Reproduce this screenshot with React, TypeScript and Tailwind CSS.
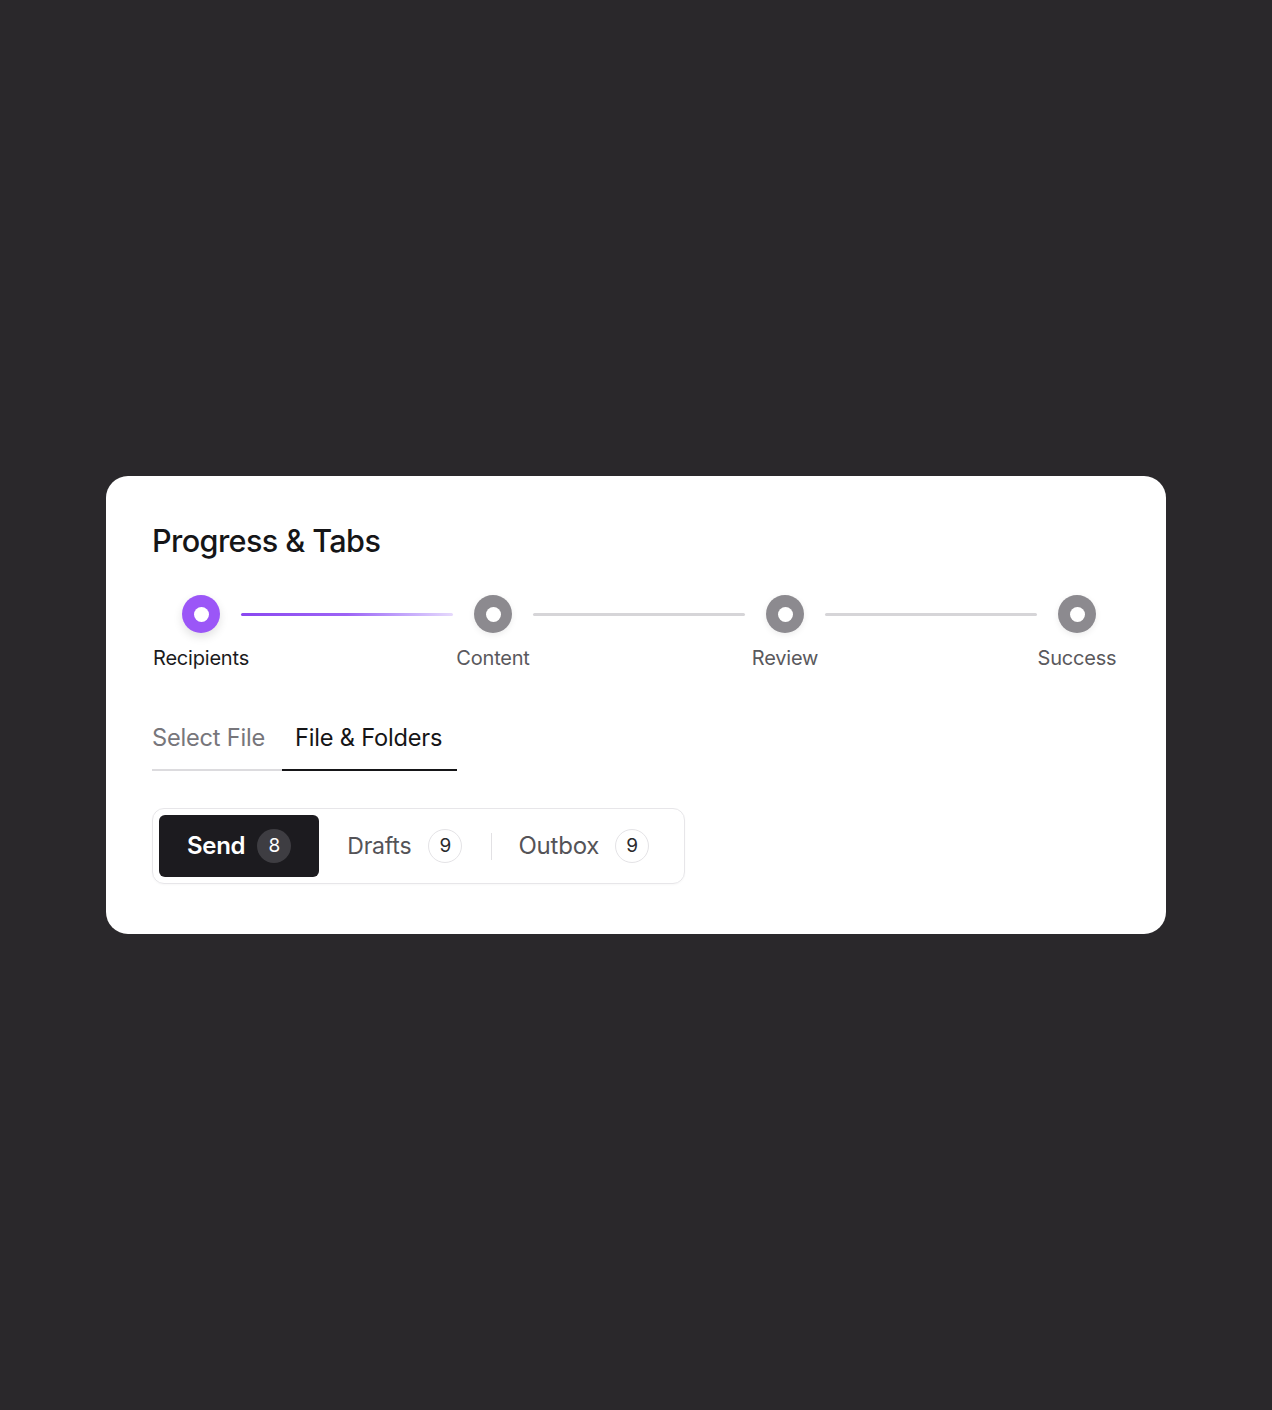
import React from "react";

const font = { fontFamily: "Inter, 'Noto Sans', sans-serif" };

function Dot({ active }: { active?: boolean }) {
  return (
    <div
      className={
        "flex h-[38px] w-[38px] flex-none items-center justify-center rounded-full " +
        (active
          ? "bg-[#9b56f7] shadow-[0_4px_10px_rgba(0,0,0,0.12)]"
          : "bg-[#8c8a8f] shadow-[0_2px_6px_rgba(0,0,0,0.08)]")
      }
    >
      <div className="h-[15px] w-[15px] rounded-full bg-white" />
    </div>
  );
}

function Step({ label, active }: { label: string; active?: boolean }) {
  return (
    <div className="flex w-[38px] flex-none flex-col items-center">
      <Dot active={active} />
      <div
        className={
          "mt-[13px] whitespace-nowrap text-[20px] leading-[24px] tracking-[-0.2px] " +
          (active ? "text-[#1b1b1d]" : "text-[#5a595d]")
        }
      >
        {label}
      </div>
    </div>
  );
}

function Line({ active }: { active?: boolean }) {
  return (
    <div
      className={
        "mx-[21px] mt-[17.5px] h-[3px] w-[212px] flex-none rounded-full " +
        (active
          ? "bg-gradient-to-r from-[#8a47f0] via-[#9d63f5] to-[#e6d9fc]"
          : "bg-[#d6d5d8]")
      }
    />
  );
}

function Badge({ n, dark }: { n: string; dark?: boolean }) {
  return (
    <div
      className={
        "flex h-[34px] w-[34px] items-center justify-center rounded-full text-[19px] " +
        (dark
          ? "bg-[#3e3d42] text-white"
          : "border border-[#e4e3e6] bg-white text-[#2a2a2d]")
      }
    >
      {n}
    </div>
  );
}

export default function App() {
  return (
    <div
      className="flex min-h-[1410px] w-full items-start justify-center bg-[#2a282b] pt-[476px]"
      style={font}
    >
      <div className="h-[458px] w-[1060px] rounded-[22px] bg-white px-[46px] pt-[45px]">
        <h1 className="text-[30.6px] font-medium leading-[40px] tracking-[-0.6px] text-[#151517]">
          Progress &amp; Tabs
        </h1>

        <div className="ml-[30px] mt-[34px] flex items-start">
          <Step label="Recipients" active />
          <Line active />
          <Step label="Content" />
          <Line />
          <Step label="Review" />
          <Line />
          <Step label="Success" />
        </div>

        <div className="mt-[54px] flex">
          <div className="border-b-2 border-[#dcdbde] pb-[17px] pr-[17px] text-[23.6px] leading-[28px] tracking-[-0.2px] text-[#77767b]">
            Select File
          </div>
          <div className="border-b-2 border-[#161618] pb-[17px] pl-[13px] pr-[15px] text-[23.6px] leading-[28px] tracking-[-0.2px] text-[#151517]">
            File &amp; Folders
          </div>
        </div>

        <div className="mt-[37px] inline-flex items-center rounded-[12px] border border-[#e7e6e9] p-[6px] shadow-[0_1px_2px_rgba(0,0,0,0.03)]">
          <div className="flex h-[62px] items-center gap-[12px] rounded-[6px] bg-[#1c1b1f] pl-[28px] pr-[28px]">
            <span className="text-[24px] font-semibold tracking-[-0.3px] text-white">Send</span>
            <Badge n="8" dark />
          </div>
          <div className="flex h-[62px] items-center gap-[17px] pl-[28px] pr-[29px]">
            <span className="text-[23px] tracking-[-0.2px] text-[#545357]">Drafts</span>
            <Badge n="9" />
          </div>
          <div className="h-[27px] w-px bg-[#e2e1e4]" />
          <div className="flex h-[62px] items-center gap-[16px] pl-[26px] pr-[29px]">
            <span className="text-[24px] tracking-[-0.2px] text-[#545357]">Outbox</span>
            <Badge n="9" />
          </div>
        </div>
      </div>
    </div>
  );
}
